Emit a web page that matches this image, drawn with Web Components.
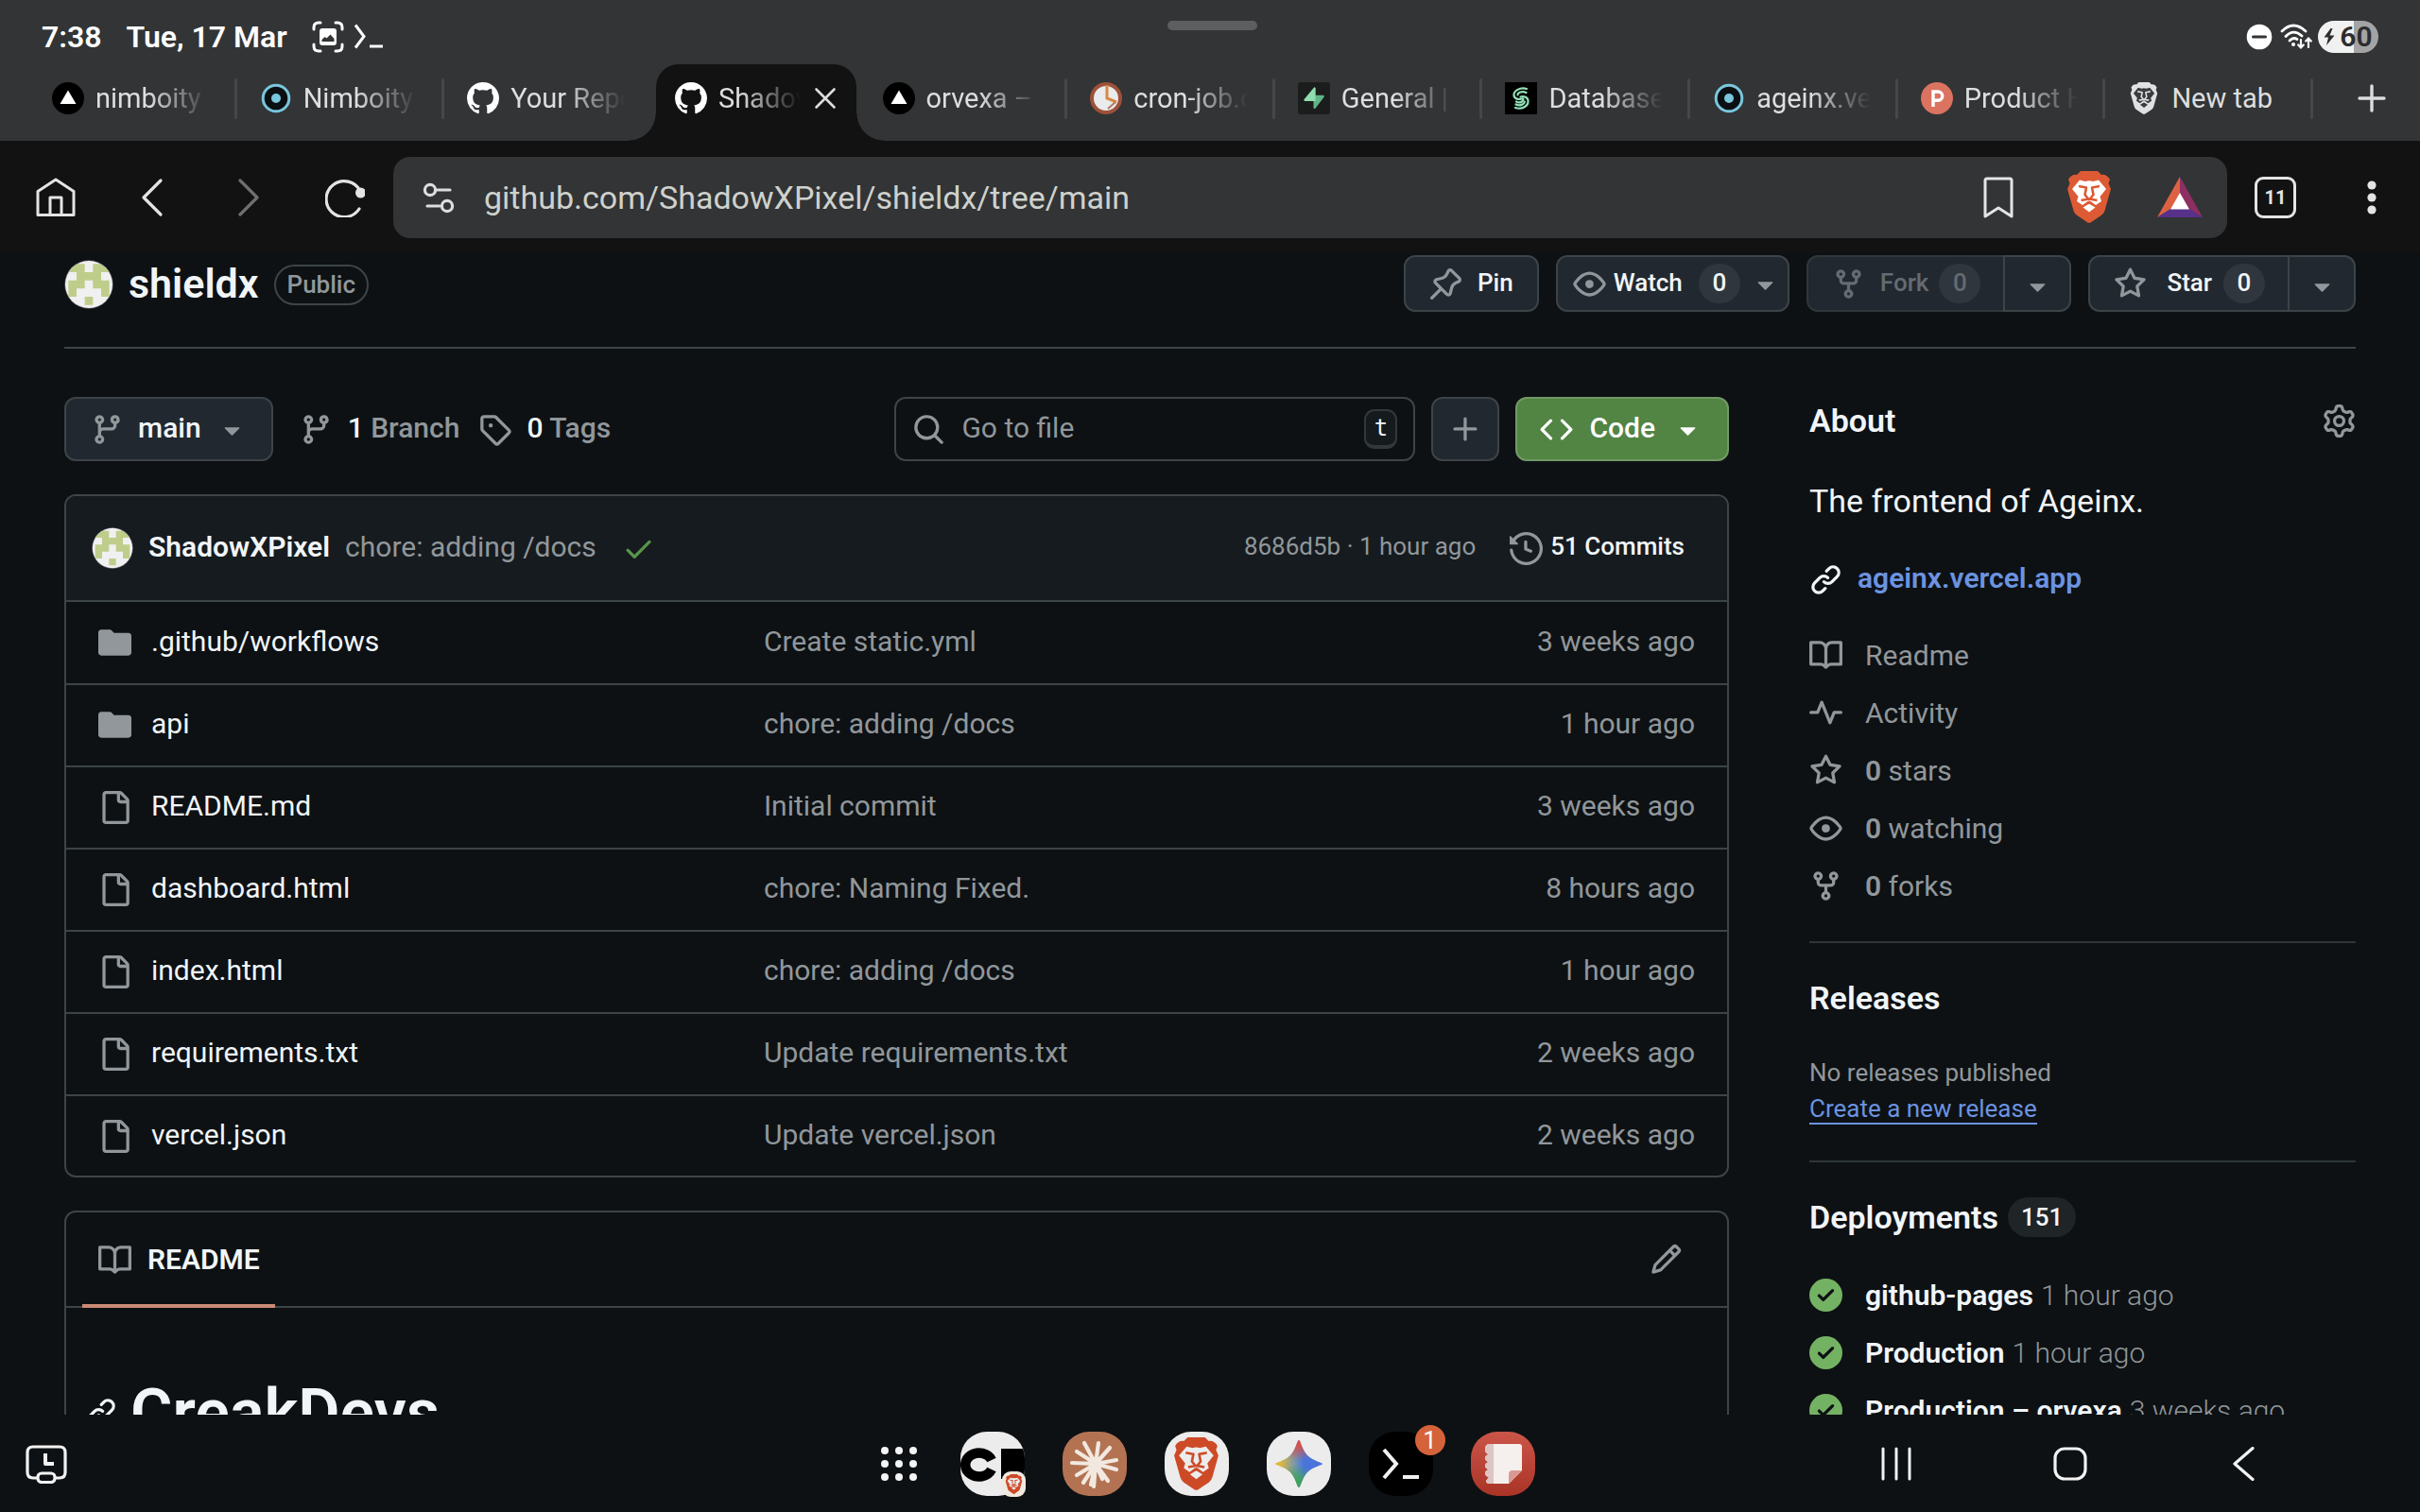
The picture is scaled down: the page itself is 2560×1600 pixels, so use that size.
<!DOCTYPE html>
<html lang="en">
<head>
<meta charset="utf-8">
<title>ShadowXPixel/shieldx</title>
<style>
  :root {
    --bg: #0d1114; --chrome: #323435; --bar: #121212; --line: #3d4447;
    --muted: #91979b; --text: #f1f5f8; --btn: #212830; --link: #6b93e0;
  }
  * { box-sizing: border-box; }
  body { margin: 0; height: 100vh; display: flex; flex-direction: column; overflow: hidden;
    background: var(--bg); color: var(--text); font: 400 30px/45px Roboto, "Noto Sans", sans-serif; }
  main { flex: 1; min-height: 0; overflow: hidden; padding: 0 68px; }
  .layout { display: grid; grid-template-columns: minmax(0, 1fr) 578px; column-gap: 85px; padding-top: 51px; }
  .left { display: flex; flex-direction: column; gap: 35px; min-width: 0; }
</style>
</head>
<body>
  <status-bar></status-bar>
  <tab-strip>
    <browser-tab icon="vercel">nimboity ·</browser-tab>
    <browser-tab icon="ring">Nimboity</browser-tab>
    <browser-tab icon="github" last>Your Repositories</browser-tab>
    <browser-tab icon="github" active>ShadowXPixel</browser-tab>
    <browser-tab icon="vercel">orvexa –</browser-tab>
    <browser-tab icon="cron">cron-job.org</browser-tab>
    <browser-tab icon="supabase">General | Settings</browser-tab>
    <browser-tab icon="spiral">Database</browser-tab>
    <browser-tab icon="ring">ageinx.vercel</browser-tab>
    <browser-tab icon="ph">Product Hunt</browser-tab>
    <browser-tab icon="lionmono" fits>New tab</browser-tab>
  </tab-strip>
  <tool-bar></tool-bar>
  <main>
    <repo-header></repo-header>
    <div class="layout">
      <div class="left">
        <file-nav></file-nav>
        <file-list></file-list>
        <readme-card></readme-card>
      </div>
      <about-panel></about-panel>
    </div>
  </main>
  <task-bar></task-bar>

<script>
const oct = d => ['0 0 16 16', `<path fill="currentColor" d="${d}"/>`];
const lion = (body, face) => ['0 0 46 55',
  `<path fill="${body}" d="M14 0H32L36 4C39 3 43 5 45 9L43.500 13L46 19L39.500 42Q38.500 45 36 46.800L25 54.200Q23 55.300 21 54.200L10 46.800Q7.500 45 6.500 42L0 19L2.500 13L1 9C3 5 7 3 10 4Z"/>
   <path fill="${face}" d="M13 9.500L19 11Q23 9.500 27 11L33 9.500L41 19L34.500 27L36 32L30 36L24.500 32Q23 31 21.500 32L16 36L10 32L11.500 27L5 19Z M16.500 38.500L22 35.200Q23 34.600 24 35.200L29.500 38.500L23 43.500Z"/>
   <path fill="none" stroke="${body}" stroke-width="2.600" stroke-linejoin="round" d="M12 16L20 17.500L18.500 25L22 29.500H24L27.500 25L26 17.500L34 16M14.500 31L23 29.500L31.500 31"/>`];
const ICONS = {
  fork: oct("M5 5.372v.878c0 .414.336.75.75.75h4.5a.75.75 0 0 0 .75-.75v-.878a2.25 2.25 0 1 1 1.5 0v.878a2.25 2.25 0 0 1-2.25 2.25h-1.5v2.128a2.251 2.251 0 1 1-1.5 0V8.5h-1.5A2.25 2.25 0 0 1 3.5 6.25v-.878a2.25 2.25 0 1 1 1.5 0ZM5 3.25a.75.75 0 1 0-1.5 0 .75.75 0 0 0 1.5 0Zm6.75.75a.75.75 0 1 0 0-1.5.75.75 0 0 0 0 1.5Zm-3 8.75a.75.75 0 1 0-1.5 0 .75.75 0 0 0 1.5 0Z"),
  branch: oct("M9.5 3.25a2.25 2.25 0 1 1 3 2.122V6A2.5 2.5 0 0 1 10 8.5H6a1 1 0 0 0-1 1v1.128a2.251 2.251 0 1 1-1.5 0V5.372a2.25 2.25 0 1 1 1.5 0v1.836A2.493 2.493 0 0 1 6 7h4a1 1 0 0 0 1-1v-.628A2.25 2.25 0 0 1 9.5 3.25Zm-6 0a.75.75 0 1 0 1.5 0 .75.75 0 0 0-1.5 0Zm8.25-.75a.75.75 0 1 0 0 1.5.75.75 0 0 0 0-1.5ZM4.25 12a.75.75 0 1 0 0 1.5.75.75 0 0 0 0-1.5Z"),
  tag: oct("M1 7.775V2.75C1 1.784 1.784 1 2.75 1h5.025c.464 0 .91.184 1.238.513l6.25 6.25a1.75 1.75 0 0 1 0 2.474l-5.026 5.026a1.75 1.75 0 0 1-2.474 0l-6.25-6.25A1.752 1.752 0 0 1 1 7.775Zm1.5 0c0 .066.026.13.073.177l6.25 6.25a.25.25 0 0 0 .354 0l5.025-5.025a.25.25 0 0 0 0-.354l-6.25-6.25a.25.25 0 0 0-.177-.073H2.75a.25.25 0 0 0-.25.25ZM6 5a1 1 0 1 1 0 2 1 1 0 0 1 0-2Z"),
  search: oct("M10.68 11.74a6 6 0 0 1-7.922-8.982 6 6 0 0 1 8.982 7.922l3.04 3.04a.749.749 0 0 1-.326 1.275.749.749 0 0 1-.734-.215ZM11.5 7a4.499 4.499 0 1 0-8.997 0A4.499 4.499 0 0 0 11.5 7Z"),
  eye: oct("M8 2c1.981 0 3.671.992 4.933 2.078 1.27 1.091 2.187 2.345 2.637 3.023a1.62 1.62 0 0 1 0 1.798c-.45.678-1.367 1.932-2.637 3.023C11.67 13.008 9.981 14 8 14c-1.981 0-3.671-.992-4.933-2.078C1.797 10.83.88 9.576.43 8.898a1.62 1.62 0 0 1 0-1.798c.45-.677 1.367-1.931 2.637-3.022C4.33 2.992 6.019 2 8 2ZM1.679 7.932a.12.12 0 0 0 0 .136c.411.622 1.241 1.75 2.366 2.717C5.176 11.758 6.527 12.5 8 12.5c1.473 0 2.825-.742 3.955-1.715 1.124-.967 1.954-2.096 2.366-2.717a.12.12 0 0 0 0-.136c-.412-.621-1.242-1.75-2.366-2.717C10.824 4.242 9.473 3.5 8 3.5c-1.473 0-2.825.742-3.955 1.715-1.124.967-1.954 2.096-2.366 2.717ZM8 10a2 2 0 1 1-.001-3.999A2 2 0 0 1 8 10Z"),
  star: oct("M8 .25a.75.75 0 0 1 .673.418l1.882 3.815 4.21.612a.75.75 0 0 1 .416 1.279l-3.046 2.97.719 4.192a.751.751 0 0 1-1.088.791L8 12.347l-3.766 1.98a.75.75 0 0 1-1.088-.79l.72-4.194L.818 6.374a.75.75 0 0 1 .416-1.28l4.21-.611L7.327.668A.75.75 0 0 1 8 .25Zm0 2.445L6.615 5.5a.75.75 0 0 1-.564.41l-3.097.45 2.24 2.184a.75.75 0 0 1 .216.664l-.528 3.084 2.769-1.456a.75.75 0 0 1 .698 0l2.77 1.456-.53-3.084a.75.75 0 0 1 .216-.664l2.24-2.183-3.096-.45a.75.75 0 0 1-.564-.41L8 2.694Z"),
  pin: oct("m11.294.984 3.722 3.722a1.75 1.75 0 0 1-.504 2.826l-1.327.613a3.089 3.089 0 0 0-1.707 2.084l-.584 2.454c-.317 1.332-1.972 1.8-2.94.832L5.75 11.311 1.78 15.28a.749.749 0 1 1-1.06-1.06l3.969-3.97-2.204-2.204c-.968-.968-.5-2.623.832-2.94l2.454-.584a3.08 3.08 0 0 0 2.084-1.707l.613-1.327a1.75 1.75 0 0 1 2.826-.504ZM6.283 9.723l2.732 2.731a.25.25 0 0 0 .42-.119l.584-2.454a4.586 4.586 0 0 1 2.537-3.098l1.328-.613a.25.25 0 0 0 .072-.404l-3.722-3.722a.25.25 0 0 0-.404.072l-.613 1.328a4.584 4.584 0 0 1-3.098 2.537l-2.454.584a.25.25 0 0 0-.119.42l2.731 2.732Z"),
  code: oct("m11.28 3.22 4.25 4.25a.75.75 0 0 1 0 1.06l-4.25 4.25a.749.749 0 0 1-1.275-.326.749.749 0 0 1 .215-.734L13.94 8l-3.72-3.72a.749.749 0 0 1 .326-1.275.749.749 0 0 1 .734.215Zm-6.56 0a.751.751 0 0 1 1.042.018.751.751 0 0 1 .018 1.042L2.06 8l3.72 3.72a.749.749 0 0 1-.326 1.275.749.749 0 0 1-.734-.215L.47 8.53a.75.75 0 0 1 0-1.06Z"),
  plus: oct("M7.75 2a.75.75 0 0 1 .75.75V7h4.25a.75.75 0 0 1 0 1.5H8.5v4.25a.75.75 0 0 1-1.5 0V8.5H2.75a.75.75 0 0 1 0-1.5H7V2.75A.75.75 0 0 1 7.75 2Z"),
  caret: oct("m4.427 7.427 3.396 3.396a.25.25 0 0 0 .354 0l3.396-3.396A.25.25 0 0 0 11.396 7H4.604a.25.25 0 0 0-.177.427Z"),
  history: oct("m.427 1.927 1.215 1.215a8.002 8.002 0 1 1-1.6 5.685.75.75 0 1 1 1.493-.154 6.5 6.5 0 1 0 1.18-4.458l1.358 1.358A.25.25 0 0 1 3.896 6H.25A.25.25 0 0 1 0 5.75V2.104a.25.25 0 0 1 .427-.177ZM7.75 4a.75.75 0 0 1 .75.75v2.992l2.028.812a.75.75 0 0 1-.557 1.392l-2.5-1A.751.751 0 0 1 7 8.25v-3.5A.75.75 0 0 1 7.75 4Z"),
  folder: ['0 0 16 16', '<path fill="currentColor" d="M1.400 1.500C.630 1.500 0 2.130 0 2.900V12.600C0 13.400.630 14 1.400 14H14.600C15.400 14 16 13.400 16 12.600V4.500C16 3.700 15.400 3.100 14.600 3.100H7.600L6.500 1.900C6.250 1.650 5.900 1.500 5.500 1.500Z"/>'],
  file: oct("M2 1.75C2 .784 2.784 0 3.75 0h6.586c.464 0 .909.184 1.237.513l2.914 2.914c.329.328.513.773.513 1.237v9.586A1.75 1.75 0 0 1 13.25 16h-9.5A1.75 1.75 0 0 1 2 14.25Zm1.75-.25a.25.25 0 0 0-.25.25v12.5c0 .138.112.25.25.25h9.5a.25.25 0 0 0 .25-.25V6h-2.75A1.75 1.75 0 0 1 9 4.25V1.5Zm6.75.062V4.25c0 .138.112.25.25.25h2.688l-.011-.013-2.914-2.914-.013-.011Z"),
  book: oct("M0 1.75A.75.75 0 0 1 .75 1h4.253c1.227 0 2.317.59 3 1.501A3.743 3.743 0 0 1 11.006 1h4.245a.75.75 0 0 1 .75.75v10.5a.75.75 0 0 1-.75.75h-4.507a2.25 2.25 0 0 0-1.591.659l-.622.621a.75.75 0 0 1-1.06 0l-.622-.621A2.25 2.25 0 0 0 5.258 13H.75a.75.75 0 0 1-.75-.75Zm7.251 10.324.004-5.073-.002-2.253A2.25 2.25 0 0 0 5.003 2.5H1.5v9h3.757a3.75 3.75 0 0 1 1.994.574ZM8.755 4.75l-.004 7.322a3.752 3.752 0 0 1 1.992-.572H14.5v-9h-3.495a2.25 2.25 0 0 0-2.25 2.25Z"),
  pulse: oct("M6 2c.306 0 .582.187.696.471L10 10.731l1.304-3.26A.751.751 0 0 1 12 7h3.25a.75.75 0 0 1 0 1.5h-2.742l-1.812 4.528a.751.751 0 0 1-1.392 0L6 4.77 4.696 8.03A.75.75 0 0 1 4 8.5H.75a.75.75 0 0 1 0-1.5h2.742l1.812-4.529A.751.751 0 0 1 6 2Z"),
  link: oct("m7.775 3.275 1.25-1.25a3.5 3.5 0 1 1 4.95 4.95l-2.5 2.5a3.5 3.5 0 0 1-4.95 0 .751.751 0 0 1 .018-1.042.751.751 0 0 1 1.042-.018 1.998 1.998 0 0 0 2.83 0l2.5-2.5a2.002 2.002 0 0 0-2.83-2.83l-1.25 1.25a.751.751 0 0 1-1.042-.018.751.751 0 0 1-.018-1.042Zm-4.69 9.64a1.998 1.998 0 0 0 2.83 0l1.25-1.25a.751.751 0 0 1 1.042.018.751.751 0 0 1 .018 1.042l-1.25 1.25a3.5 3.5 0 1 1-4.95-4.95l2.5-2.5a3.5 3.5 0 0 1 4.95 0 .751.751 0 0 1-.018 1.042.751.751 0 0 1-1.042.018 1.998 1.998 0 0 0-2.83 0l-2.5 2.5a1.998 1.998 0 0 0 0 2.83Z"),
  check: oct("M13.78 4.22a.75.75 0 0 1 0 1.06l-7.25 7.25a.75.75 0 0 1-1.06 0L2.22 9.28a.751.751 0 0 1 .018-1.042.751.751 0 0 1 1.042-.018L6 10.94l6.72-6.72a.75.75 0 0 1 1.06 0Z"),
  success: oct("M8 16A8 8 0 1 1 8 0a8 8 0 0 1 0 16Zm3.78-9.72a.751.751 0 0 0-.018-1.042.751.751 0 0 0-1.042-.018L6.75 9.19 5.28 7.72a.751.751 0 0 0-1.042.018.751.751 0 0 0-.018 1.042l2 2a.75.75 0 0 0 1.06 0Z"),
  pencil: oct("M11.013 1.427a1.75 1.75 0 0 1 2.474 0l1.086 1.086a1.75 1.75 0 0 1 0 2.474l-8.61 8.61c-.21.21-.47.364-.756.445l-3.251.93a.75.75 0 0 1-.927-.928l.929-3.25c.081-.286.235-.547.445-.758l8.61-8.61Zm.176 4.823L9.75 4.81l-6.286 6.287a.253.253 0 0 0-.064.108l-.558 1.953 1.953-.558a.253.253 0 0 0 .108-.064Zm1.238-3.763a.25.25 0 0 0-.354 0L10.811 3.75l1.439 1.44 1.263-1.263a.25.25 0 0 0 0-.354Z"),
  gear: oct("M8 0a8.2 8.2 0 0 1 .701.031C9.444.095 9.99.645 10.16 1.29l.288 1.107c.018.066.079.158.212.224.231.114.454.243.668.386.123.082.233.09.299.071l1.103-.303c.644-.176 1.392.021 1.82.63.27.385.506.792.704 1.218.315.675.111 1.422-.364 1.891l-.814.806c-.049.048-.098.147-.088.294.016.257.016.515 0 .772-.01.147.038.246.088.294l.814.806c.475.469.679 1.216.364 1.891a7.977 7.977 0 0 1-.704 1.217c-.428.61-1.176.807-1.82.63l-1.102-.302c-.067-.019-.177-.011-.3.071a5.909 5.909 0 0 1-.668.386c-.133.066-.194.158-.211.224l-.29 1.106c-.168.646-.715 1.196-1.458 1.26a8.006 8.006 0 0 1-1.402 0c-.743-.064-1.289-.614-1.458-1.26l-.289-1.106c-.018-.066-.079-.158-.212-.224a5.738 5.738 0 0 1-.668-.386c-.123-.082-.233-.09-.299-.071l-1.103.303c-.644.176-1.392-.021-1.82-.63a8.12 8.12 0 0 1-.704-1.218c-.315-.675-.111-1.422.363-1.891l.815-.806c.05-.048.098-.147.088-.294a6.214 6.214 0 0 1 0-.772c.01-.147-.038-.246-.088-.294l-.815-.806C.635 6.045.431 5.298.746 4.623a7.92 7.92 0 0 1 .704-1.217c.428-.61 1.176-.807 1.82-.63l1.102.302c.067.019.177.011.3-.071.214-.143.437-.272.668-.386.133-.066.194-.158.211-.224l.29-1.106C6.009.645 6.556.095 7.299.03 7.53.01 7.764 0 8 0Zm-.571 1.525c-.036.003-.108.036-.137.146l-.289 1.105c-.147.561-.549.967-.998 1.189-.173.086-.34.183-.5.29-.417.278-.97.423-1.529.27l-1.103-.303c-.109-.03-.175.016-.195.045-.22.312-.412.644-.573.99-.014.031-.021.11.059.19l.815.806c.411.406.562.957.53 1.456a4.709 4.709 0 0 0 0 .582c.032.499-.119 1.05-.53 1.456l-.815.806c-.081.08-.073.159-.059.19.162.346.353.677.573.989.02.03.085.076.195.046l1.102-.303c.56-.153 1.113-.008 1.53.27.161.107.328.204.501.29.447.222.85.629.997 1.189l.289 1.105c.029.109.101.143.137.146a6.6 6.6 0 0 0 1.142 0c.036-.003.108-.036.137-.146l.289-1.105c.147-.561.549-.967.998-1.189.173-.086.34-.183.5-.29.417-.278.97-.423 1.529-.27l1.103.303c.109.029.175-.016.195-.045.22-.313.411-.644.573-.99.014-.031.021-.11-.059-.19l-.815-.806c-.411-.406-.562-.957-.53-1.456a4.709 4.709 0 0 0 0-.582c-.032-.499.119-1.05.53-1.456l.815-.806c.081-.08.073-.159.059-.19a6.464 6.464 0 0 0-.573-.989c-.02-.03-.085-.076-.195-.046l-1.102.303c-.56.153-1.113.008-1.53-.27a4.44 4.44 0 0 0-.501-.29c-.447-.222-.85-.629-.997-1.189l-.289-1.105c-.029-.11-.101-.143-.137-.146a6.6 6.6 0 0 0-1.142 0ZM11 8a3 3 0 1 1-6 0 3 3 0 0 1 6 0ZM9.5 8a1.5 1.5 0 1 0-3.001.001A1.5 1.5 0 0 0 9.5 8Z"),
  github: ['0 0 16 16', '<path fill="#fff" d="M8 0c4.42 0 8 3.58 8 8a8.013 8.013 0 0 1-5.45 7.59c-.4.08-.55-.17-.55-.38 0-.27.01-1.13.01-2.2 0-.75-.25-1.23-.54-1.48 1.78-.2 3.65-.88 3.65-3.95 0-.88-.31-1.59-.82-2.15.08-.2.36-1.02-.08-2.12 0 0-.67-.22-2.2.82-.64-.18-1.32-.27-2-.27-.68 0-1.36.09-2 .27-1.53-1.03-2.2-.82-2.2-.82-.44 1.1-.16 1.92-.08 2.12-.51.56-.82 1.28-.82 2.15 0 3.06 1.86 3.75 3.64 3.95-.23.2-.44.55-.51 1.07-.46.21-1.61.55-2.33-.66-.15-.24-.6-.83-1.23-.82-.67.01-.27.38.01.53.34.19.73.9.82 1.13.16.45.68 1.31 2.69.94 0 .67.01 1.3.01 1.49 0 .21-.15.45-.55.38A7.995 7.995 0 0 1 0 8c0-4.42 3.58-8 8-8Z"/>'],
  vercel: ['0 0 34 34', '<circle cx="17" cy="17" r="17" fill="#000"/><path fill="#fff" d="M17 8.500L25.500 23H8.500Z"/>'],
  ring: ['0 0 34 34', '<circle cx="17" cy="17" r="13.800" fill="#0b0f12" stroke="#79c6dd" stroke-width="3"/><circle cx="17" cy="17" r="5" fill="#79c6dd"/>'],
  cron: ['0 0 34 34', '<circle cx="17" cy="17" r="15" fill="#e9ebec" stroke="#9d513a" stroke-width="4"/><path fill="none" stroke="#d98844" stroke-width="3" d="M18 3V17L28 21"/><path fill="none" stroke="#b07a62" stroke-width="2" d="M27 21L19 28"/>'],
  supabase: ['0 0 34 34', '<rect width="34" height="34" rx="3" fill="#1b1c1c"/><path fill="#5fb387" d="M18.500 6.500C18.500 5.500 17.400 5.200 16.800 6L6.800 18C6.200 18.900 6.700 20 7.700 20H16.500V27C16.500 28 17.800 28.500 18.400 27.700L27.600 15.800C28.200 15 27.700 13.800 26.700 13.800H18.500Z"/><path fill="#8fdcae" d="M18.500 6.500C18.500 5.500 17.400 5.200 16.800 6L6.800 18C6.200 18.900 6.700 20 7.700 20H18.500Z"/>'],
  spiral: ['0 0 34 34', '<rect width="34" height="34" fill="#000"/><g fill="none" stroke="#93e2b8" stroke-width="2.200" stroke-linecap="round"><path d="M23 7C16 5 9 9 9.500 14C10 18 15 18.500 17.500 17.500C20 16.500 20 19 18 20.500C16 22 13 21.500 12 20.500"/><path d="M22.500 11C18 9 13.500 11 13.500 13.500"/><path d="M11 27C18 29.500 25 25 24.500 19.500C24 15 19 14.500 16.500 15.500"/><path d="M11.500 23.500C16 25.500 20.500 23.500 20.800 20.500"/></g>'],
  ph: ['0 0 34 34', '<circle cx="17" cy="17" r="17" fill="#da7360"/><path fill="none" stroke="#fff" stroke-width="3.400" d="M13 26V10H18.200A4.600 4.600 0 0 1 18.200 19.200H13"/>'],
  lion: lion('#dd5a34', '#fff'),
  lionred: lion('#cd4a27', '#ececec'),
  lionmono: lion('#dfe1e3', '#3a3c3d'),
  bat: ['0 0 48 44', '<path fill="#dd6244" d="M24 0V18L14.500 34L0 43Z"/><path fill="#8d2f62" d="M24 0L48 43L33.500 34L24 18Z"/><path fill="#57318a" d="M0 43L14.500 34H33.500L48 43Z"/><path fill="#fff" d="M24 17L34 34.500H14Z"/>'],
  home: ['0 0 42 42', '<g fill="none" stroke="#e3e4e5" stroke-width="3" stroke-linejoin="round"><path d="M2 14.500L21 2L40 14.500V39.500H2Z"/><path d="M15 39V21H27V39"/></g>'],
  back: ['0 0 42 42', '<path fill="none" stroke="#e3e4e5" stroke-width="3.200" stroke-linecap="round" stroke-linejoin="round" d="M30 3L12 21L30 39"/>'],
  forward: ['0 0 42 42', '<path fill="none" stroke="#6f7071" stroke-width="3.200" stroke-linecap="round" stroke-linejoin="round" d="M12 3L30 21L12 39"/>'],
  reload: ['0 0 42 42', '<path fill="none" stroke="#e3e4e5" stroke-width="3.200" stroke-linecap="round" d="M36 33A19 19 0 1 1 37 14"/><circle cx="37.500" cy="16" r="5.500" fill="#e3e4e5"/>'],
  tune: ['0 0 34 34', '<g fill="none" stroke="#dcddde" stroke-width="3.200" stroke-linecap="round"><circle cx="8" cy="9" r="5.600"/><path d="M15 9H29M5 26H18"/><circle cx="26" cy="26" r="5.600"/></g>'],
  bookmark: ['0 0 34 44', '<path fill="none" stroke="#e3e4e5" stroke-width="3" stroke-linejoin="round" d="M3 4Q3 2 5 2H29Q31 2 31 4V42L17 33L3 42Z"/>'],
  dots: ['0 0 10 38', '<g fill="#e3e4e5"><circle cx="5" cy="6" r="4.600"/><circle cx="5" cy="19" r="4.600"/><circle cx="5" cy="32" r="4.600"/></g>'],
  close: ['0 0 24 24', '<path stroke="#dcddde" stroke-width="2.600" stroke-linecap="round" d="M2.500 2.500L21.500 21.500M21.500 2.500L2.500 21.500"/>'],
  add: ['0 0 30 30', '<path stroke="#dcddde" stroke-width="3.400" stroke-linecap="round" d="M15 2V28M2 15H28"/>'],
  shot: ['0 0 34 34', '<g fill="none" stroke="#fff" stroke-width="3" stroke-linecap="round"><path d="M2 9V7Q2 2 7 2H9M25 2H27Q32 2 32 7V9M32 25V27Q32 32 27 32H25M9 32H7Q2 32 2 27V25"/></g><path fill="#fff" fill-rule="evenodd" d="M11 8H23Q26 8 26 11V23Q26 26 23 26H11Q8 26 8 23V11Q8 8 11 8ZM10.500 22H23.500V19L19.500 14.500L15.500 18.500L13.500 17L10.500 20Z"/>'],
  prompt: ['0 0 32 28', '<path fill="none" stroke="#fff" stroke-width="3" d="M2 1.500L11 13.500L2 25.500M17 24H31"/>'],
  dnd: ['0 0 28 28', '<circle cx="14" cy="14" r="13.300" fill="#fff"/><path stroke="#323435" stroke-width="3" stroke-linecap="round" d="M7.500 14H20.500"/>'],
  wifi: ['0 0 34 28', '<g fill="none" stroke="#fff" stroke-width="2.800" stroke-linecap="round"><path d="M2 8Q14-4 27 8M6 13.500Q14 5 23 13"/><path d="M10 18Q14 14 18 16.500"/><path stroke-width="2.200" d="M22 17V25M19.200 22.500L22 25.500L24.800 22.500M30 25V16M27.200 18.500L30 15.500L32.800 18.500"/></g><circle cx="14" cy="22" r="2" fill="#fff"/>'],
  bolt: ['0 0 12 18', '<path fill="#2c2d2f" d="M7.500 0L.500 9.500H5L3 18L11.500 7.500H6.500L9.500 0Z"/>'],
  avatar: ['0 0 420 420', '<clipPath id="c"><circle cx="210" cy="210" r="202"/></clipPath><circle cx="210" cy="210" r="208" fill="#55585a"/><g clip-path="url(#c)"><rect width="420" height="420" fill="#f0f0f0"/><path fill="#bfcd8b" d="M35 35H175V105H245V35H385V105H315V175H385V315H315V245H245V175H175V245H105V315H35V175H105V105H35ZM175 315H245V385H175Z"/></g>'],
  recents: ['0 0 36 36', '<path stroke="#f2f2f2" stroke-width="3" stroke-linecap="round" d="M4 2V34M18 2V34M32 2V34"/>'],
  navhome: ['0 0 36 36', '<rect x="2" y="2" width="32" height="32" rx="10" fill="none" stroke="#f2f2f2" stroke-width="3.200"/>'],
  navback: ['0 0 36 36', '<path fill="none" stroke="#f2f2f2" stroke-width="3.200" stroke-linecap="round" stroke-linejoin="round" d="M27 1.500L8 18L27 34.500"/>'],
  clock: ['0 0 46 42', '<g fill="none" stroke="#f2f2f2" stroke-width="3.200"><path d="M15 36H9Q3 36 3 30V9Q3 3 9 3H37Q43 3 43 9V30Q43 36 37 36H31"/><rect x="14" y="31" width="18" height="9.500" rx="4"/><path stroke-width="4" stroke-linejoin="round" d="M22 10V21H31"/></g>'],
  grid: ['0 0 40 36', '<g fill="#f4f4f4"><circle cx="5" cy="4" r="4"/><circle cx="20" cy="4" r="4"/><circle cx="35" cy="4" r="4"/><circle cx="5" cy="18" r="4"/><circle cx="20" cy="18" r="4"/><circle cx="35" cy="18" r="4"/><circle cx="5" cy="32" r="4"/><circle cx="20" cy="32" r="4"/><circle cx="35" cy="32" r="4"/></g>'],
  appc: ['0 0 68 68', '<path fill="none" stroke="#000" stroke-width="10.500" d="M33 30A14.500 12.500 0 1 0 33 40"/><path d="M43 18H68V50H43Z"/>'],
  burst: ['0 0 68 68', '<g stroke="#f1e9e0" stroke-width="4.200" stroke-linecap="round" transform="translate(35 34)"><path d="M0 0L-12-22M0 0L3-22M0 0L15-17M0 0L22-4M0 0L22 6M0 0L13 18M0 0L-2 24M0 0L-13 20M0 0L-20 12M0 0L-25-1M0 0L-20-13M0 0L-5 22M0 0L7 16"/></g>'],
  gemini: ['0 0 68 68', '<defs><linearGradient id="b" x1="0" x2="1" y1="0" y2="0"><stop offset=".1" stop-color="#e0b93c"/><stop offset=".45" stop-color="#6d93b8"/><stop offset=".6" stop-color="#4a74dc"/></linearGradient><radialGradient id="r" cx=".48" cy=".02" r=".42"><stop offset=".2" stop-color="#d9504a"/><stop offset="1" stop-color="#d9504a" stop-opacity="0"/></radialGradient><radialGradient id="g" cx=".44" cy="1" r=".48"><stop offset=".3" stop-color="#3fa356"/><stop offset="1" stop-color="#3fa356" stop-opacity="0"/></radialGradient></defs>' + ['b', 'r', 'g'].map(f => `<path fill="url(#${f})" d="M34 9C36 9 36.500 18 43 25C50 31.500 59 32.500 59 34C59 35.500 50 36.500 43 43C36.500 50 36 59 34 59C32 59 31.500 50 25 43C18 36.500 9 35.500 9 34C9 32.500 18 31.500 25 25C31.500 18 32 9 34 9Z"/>`).join('')],
  term: ['0 0 68 68', '<path fill="none" stroke="#f1f1f1" stroke-width="4" d="M16 19L29 34L16 49M36 48H53"/>'],
  notes: ['0 0 68 68', '<path fill="#f5efee" d="M20 13H51Q54 13 54 16V41L40 55H20Q16 55 16 52L19 48Q15 47 15 44Q15 41 19 40Q15 39 15 36Q15 33 19 32Q15 31 15 28Q15 25 19 24Q15 23 15 18.500Q15 13 20 13Z"/><path fill="#dcc5c2" d="M24 13H20Q15 13 15 18.500Q15 23 19 24Q15 25 15 28Q15 31 19 32Q15 33 15 36Q15 39 19 40Q15 41 15 44Q15 47 19 48L16 52Q16 55 20 55H24Z"/><path fill="#d99a93" d="M54 41H44Q40 41 40 45V55Z"/>'],
};

const BASE = `*,*::before,*::after{box-sizing:border-box}
  button{font:inherit;color:inherit;background:none;border:0;padding:0;margin:0;display:flex;align-items:center;justify-content:center}
  a{color:inherit;text-decoration:none} h1,h2,h3,p,ul{margin:0;padding:0;font-size:inherit;list-style:none}
  x-icon{flex:none} .t{padding-bottom:3px}`;

function component(name, css, html) {
  const t = document.createElement('template');
  t.innerHTML = `<style>${BASE}${css}</style>${html}`;
  customElements.define(name, class extends HTMLElement {
    constructor() { super(); this.attachShadow({ mode: 'open' }).append(t.content.cloneNode(true)); }
  });
}

customElements.define('x-icon', class extends HTMLElement {
  connectedCallback() {
    if (this.shadowRoot) return;
    const [box, body] = ICONS[this.getAttribute('name')];
    this.attachShadow({ mode: 'open' }).innerHTML =
      `<style>:host{display:block;width:35px;height:35px}svg{display:block;width:100%;height:100%}</style>
       <svg viewBox="${box}" aria-hidden="true">${body}</svg>`;
  }
});

component('status-bar', `
  :host{display:grid;grid-template-columns:1fr auto 1fr;align-items:center;height:68px;padding:10px 44px 0;background:var(--chrome);
    color:#fff;font-size:32px;line-height:40px;font-weight:600}
  .side{display:flex;align-items:center}.date{margin:0 26px}
  .handle{width:95px;height:10px;border-radius:5px;background:#5d5e60;align-self:start;margin:12px 0 0 4px}
  .shot{width:34px;height:34px;margin-right:10px}.prompt{width:32px;height:28px}
  .end{justify-content:flex-end}.dnd{width:28px;height:28px}.wifi{width:34px;height:28px;margin:0 6px 0 8px}
  .battery{display:flex;align-items:center;justify-content:center;gap:5px;width:64px;height:34px;border-radius:17px;color:#2c2d2f;
    background:linear-gradient(90deg,#f1f1f1 60%,#a4a4a5 60%);font-size:30px;line-height:34px}
  .bolt{width:12px;height:18px}`,
  `<div class="side"><span>7:38</span><span class="date">Tue, 17 Mar</span><x-icon class="shot" name="shot"></x-icon><x-icon class="prompt" name="prompt"></x-icon></div>
   <div class="handle"></div>
   <div class="side end"><x-icon class="dnd" name="dnd"></x-icon><x-icon class="wifi" name="wifi"></x-icon>
     <span class="battery"><x-icon class="bolt" name="bolt"></x-icon><span>60</span></span></div>`);

component('tab-strip', `
  :host{display:flex;height:81px;background:var(--chrome);padding-left:31px}
  .tabs{flex:1;display:flex;min-width:0}
  .new{width:113px;padding:0 0 9px 10px}.new x-icon{width:30px;height:30px}`,
  `<div class="tabs"><slot></slot></div><button class="new" aria-label="New tab"><x-icon name="add"></x-icon></button>`);

customElements.define('browser-tab', class extends HTMLElement {
  connectedCallback() {
    if (this.shadowRoot) return;
    const active = this.hasAttribute('active');
    this.attachShadow({ mode: 'open' }).innerHTML = `<style>${BASE}
      :host{position:relative;flex:1 1 0;min-width:0;display:flex;padding-bottom:9px;color:#dddedf;font-size:29px;line-height:40px}
      .tab{position:relative;flex:1;min-width:0;justify-content:flex-start;gap:12px;padding:0 26px 0 24px}
      .tab x-icon{width:34px;height:34px}
      .title{flex:1;text-align:left;white-space:nowrap;overflow:hidden;
        -webkit-mask:linear-gradient(90deg,#000 calc(100% - 64px),transparent);mask:linear-gradient(90deg,#000 calc(100% - 64px),transparent)}
      :host([fits]) .title{-webkit-mask:none;mask:none}
      :host::after{content:"";align-self:center;width:3px;height:43px;border-radius:2px;background:#464748}
      :host([active])::after,:host([last])::after{visibility:hidden}
      .shape{position:absolute;inset:0 4px;background:var(--bar);border-radius:24px 24px 0 0}
      .shape::before,.shape::after{content:"";position:absolute;bottom:0;width:29px;height:29px}
      .shape::before{right:100%;background:radial-gradient(circle at 0 0,transparent 28px,var(--bar) 29px)}
      .shape::after{left:100%;background:radial-gradient(circle at 100% 0,transparent 28px,var(--bar) 29px)}
      .close{position:relative;width:24px;margin-right:22px}.close x-icon{width:24px;height:24px}
      :host([active]) .tab{padding-right:14px}</style>
      ${active ? '<div class="shape"></div>' : ''}
      <button class="tab" role="tab" aria-selected="${active}"><x-icon name="${this.getAttribute('icon')}"></x-icon><span class="title"><slot></slot></span></button>
      ${active ? '<button class="close" aria-label="Close tab"><x-icon name="close"></x-icon></button>' : ''}`;
  }
});

component('tool-bar', `
  :host{display:flex;align-items:center;height:119px;background:var(--bar);padding-left:8px}
  .nav{width:102px;height:86px}.nav x-icon{width:42px;height:42px}
  .url{flex:1;display:flex;align-items:center;height:86px;border-radius:18px;background:var(--chrome);padding-right:2px}
  .url button{width:96px;height:86px}
  input{flex:1;min-width:0;border:0;padding:0;background:none;outline:0;color:#cfd1cc;font:inherit;font-size:34px;line-height:44px}
  .tune{width:34px;height:34px}.bookmark{width:34px;height:44px}.lion{width:46px;height:55px}.bat{width:48px;height:44px}
  .count{display:flex;align-items:center;justify-content:center;width:44px;height:44px;border:3px solid #e3e4e5;border-radius:9px;color:#e3e4e5;font-size:20px;line-height:24px;font-weight:700}
  .nav .dots{width:10px;height:38px}`,
  `<button class="nav" aria-label="Home"><x-icon name="home"></x-icon></button>
   <button class="nav" aria-label="Back"><x-icon name="back"></x-icon></button>
   <button class="nav" aria-label="Forward"><x-icon name="forward"></x-icon></button>
   <button class="nav" aria-label="Reload"><x-icon name="reload"></x-icon></button>
   <div class="url"><button aria-label="Site settings"><x-icon class="tune" name="tune"></x-icon></button>
     <input type="text" aria-label="Address" value="github.com/ShadowXPixel/shieldx/tree/main">
     <button aria-label="Bookmark"><x-icon class="bookmark" name="bookmark"></x-icon></button>
     <button aria-label="Shields"><x-icon class="lion" name="lion"></x-icon></button>
     <button aria-label="Rewards"><x-icon class="bat" name="bat"></x-icon></button></div>
   <button class="nav" aria-label="Open tabs"><span class="count">11</span></button>
   <button class="nav" aria-label="Menu"><x-icon class="dots" name="dots"></x-icon></button>`);

component('repo-header', `
  :host{display:flex;align-items:center;justify-content:space-between;padding:2px 0 37px;border-bottom:2px solid var(--line)}
  .title,.actions{display:flex;align-items:center}.title{padding-top:2px}
  .avatar{width:52px;height:52px}
  h1{font-size:43px;line-height:52px;font-weight:600;margin:0 16px}
  .pill{border:2px solid var(--line);border-radius:22px;height:43px;padding:0 12px;font-size:26px;line-height:38px;font-weight:500;color:var(--muted)}
  .actions{gap:18px;font-size:26px;font-weight:500;line-height:34px}
  .btn{height:60px;border:2px solid var(--line);border-radius:12px;background:var(--btn);padding:0 25px}
  .group{display:flex}.group .btn:first-child{border-radius:12px 0 0 12px;border-right:0}.group .btn:last-child{border-radius:0 12px 12px 0;width:72px;padding:4px 0 0}
  x-icon{color:var(--muted)}
  .num{min-width:44px;height:42px;border-radius:21px;background:#2f363d;line-height:40px;text-align:center}
  .pin{gap:16px}.watch{padding:0 6px 0 16px}.watch .num{margin:0 9px 0 17px}.watch x-icon:first-child{margin-right:8px}
  .fork{gap:11px;color:#646b72;padding-right:24px}.fork:disabled{border-color:#30373b}.fork x-icon{color:#646b72;margin-right:5px}
  .star{gap:12px;padding-right:24px}.star x-icon{margin-right:9px}`,
  `<div class="title"><x-icon class="avatar" name="avatar"></x-icon><h1 class="t"><a href="#shieldx">shieldx</a></h1><span class="pill">Public</span></div>
   <div class="actions">
     <button class="btn pin"><x-icon name="pin"></x-icon><span class="t">Pin</span></button>
     <button class="btn watch"><x-icon name="eye"></x-icon><span class="t">Watch</span><span class="num">0</span><x-icon name="caret"></x-icon></button>
     <div class="group"><button class="btn fork" disabled><x-icon name="fork"></x-icon><span class="t">Fork</span><span class="num">0</span></button><button class="btn" aria-label="Fork options"><x-icon name="caret"></x-icon></button></div>
     <div class="group"><button class="btn star"><x-icon name="star"></x-icon><span class="t">Star</span><span class="num">0</span></button><button class="btn" aria-label="Star options"><x-icon name="caret"></x-icon></button></div>
   </div>`);

component('file-nav', `
  :host{display:flex;align-items:center;justify-content:space-between;height:68px;font-weight:500}
  x-icon{color:var(--muted)}
  .side{display:flex;align-items:center}.end{gap:17px}
  .btn{height:68px;border:2px solid var(--line);border-radius:12px;background:var(--btn)}
  .branch{padding:0 24px 0 26px;gap:15px}
  .stat{display:flex;align-items:center;gap:16px;color:var(--muted);margin-left:28px}.stat+.stat{margin-left:20px}
  b{font-weight:500;color:var(--text)}
  .search{display:flex;align-items:center;gap:17px;width:551px;height:68px;border:2px solid var(--line);border-radius:12px;padding:0 17px}
  input{flex:1;min-width:0;border:0;padding:0 0 3px;background:none;outline:0;color:var(--text);font:inherit;font-weight:400}
  input::placeholder{color:var(--muted);opacity:1}
  kbd{width:35px;height:42px;border:2px solid #32383c;border-bottom-width:4px;border-radius:11px;background:#151a1d;text-align:center;font:400 24px/36px "DejaVu Sans Mono",monospace}
  .plus{width:72px}.code{background:#528444;border-color:#709a65;color:#fff;gap:17px;padding:0 24px}.code x-icon{color:#fff}`,
  `<div class="side"><button class="btn branch" aria-haspopup="menu"><x-icon name="branch"></x-icon><span class="t">main</span><x-icon name="caret"></x-icon></button>
     <a class="stat" href="#branches"><x-icon name="branch"></x-icon><span class="t"><b>1</b> Branch</span></a>
     <a class="stat" href="#tags"><x-icon name="tag"></x-icon><span class="t"><b>0</b> Tags</span></a></div>
   <div class="side end"><label class="search"><x-icon name="search"></x-icon><input type="text" placeholder="Go to file" aria-label="Go to file"><kbd>t</kbd></label>
     <button class="btn plus" aria-label="Add file"><x-icon name="plus"></x-icon></button>
     <button class="btn code"><x-icon name="code"></x-icon><span class="t">Code</span><x-icon name="caret"></x-icon></button></div>`);

const FILES = [
  ['folder', '.github/workflows', 'Create static.yml', '3 weeks ago'],
  ['folder', 'api', 'chore: adding /docs', '1 hour ago'],
  ['file', 'README.md', 'Initial commit', '3 weeks ago'],
  ['file', 'dashboard.html', 'chore: Naming Fixed.', '8 hours ago'],
  ['file', 'index.html', 'chore: adding /docs', '1 hour ago'],
  ['file', 'requirements.txt', 'Update requirements.txt', '2 weeks ago'],
  ['file', 'vercel.json', 'Update vercel.json', '2 weeks ago'],
];
component('file-list', `
  :host{display:block;border:2px solid var(--line);border-radius:12px;overflow:hidden}
  .commit{display:flex;align-items:center;height:112px;border-bottom:2px solid var(--line);background:#161b1f;padding:0 45px 0 27px;color:var(--muted)}
  .avatar{width:44px;height:44px;margin-right:16px}
  .commit b{font-weight:600;color:var(--text)} .msg{margin:0 27px 0 16px}
  .check{color:#57964a}.meta{margin-left:auto;margin-right:36px;font-size:26px}
  .commits{display:flex;align-items:center;gap:8px;font-size:26px}.commits b{font-weight:500}
  table{width:100%;table-layout:fixed;border-collapse:collapse;color:var(--muted)}
  td{height:87px;padding:0 0 3px;border-bottom:2px solid var(--line);line-height:40px}
  tr:last-child td{border-bottom:0;height:85px}
  td:first-child{width:42%;padding:0}td:last-child{width:20%;text-align:right;padding-right:34px}
  .name{display:flex;align-items:center;gap:21px;padding-left:34px;color:var(--text)}.name x-icon{color:var(--muted)}`,
  `<div class="commit"><x-icon class="avatar" name="avatar"></x-icon><a class="t" href="#author"><b>ShadowXPixel</b></a><a class="msg t" href="#commit">chore: adding /docs</a><x-icon class="check" name="check"></x-icon>
     <span class="meta t">8686d5b · 1 hour ago</span><a class="commits" href="#commits"><x-icon name="history"></x-icon><b class="t">51 Commits</b></a></div>
   <table><tbody>${FILES.map(([i, n, m, t]) => `<tr><td><a class="name" href="#${n}"><x-icon name="${i}"></x-icon><span class="t">${n}</span></a></td><td><a href="#c">${m}</a></td><td>${t}</td></tr>`).join('')}</tbody></table>`);

component('readme-card', `
  :host{display:block;border:2px solid var(--line);border-radius:12px}
  .head{display:flex;justify-content:space-between;height:101px;border-bottom:2px solid var(--line);padding:0 47px 0 17px;color:var(--muted)}
  .head a{display:flex;align-items:center;gap:17px;padding:4px 16px 0 17px;height:101px;border-bottom:4px solid #cb8a74;color:var(--text);font-weight:600}
  .head a x-icon{color:var(--muted)}
  .body{display:flex;align-items:center;padding:68px 19px 80px}
  h1{font-size:68px;line-height:86px;font-weight:600}.body x-icon{margin-right:14px}`,
  `<div class="head"><a href="#readme"><x-icon name="book"></x-icon><span class="t">README</span></a><button aria-label="Edit file"><x-icon name="pencil"></x-icon></button></div>
   <div class="body"><x-icon name="link"></x-icon><h1>CreakDevs</h1></div>`);

component('about-panel', `
  :host{display:block;color:var(--muted)}
  section{border-bottom:2px solid #2f3538;padding:36px 0}
  section:first-of-type{padding-top:0}section:last-of-type{border:0}
  h2{color:var(--text);font-size:34px;line-height:44px;font-weight:600}
  .head{display:flex;justify-content:space-between;align-items:center;height:50px}
  .desc{font-size:34px;line-height:52px;color:var(--text);margin:34px 0 33px}
  .site{display:flex;align-items:center;gap:16px;color:var(--text);margin-bottom:34px}.site a{color:var(--link);font-weight:600}
  ul{display:flex;flex-direction:column;gap:16px}li,li a{display:flex;align-items:center}
  li x-icon{margin-right:24px}b{font-weight:600}
  .small{font-size:26px;line-height:38px;margin-top:38px}.small a{color:var(--link);border-bottom:2px solid var(--link)}
  .count{height:42px;border-radius:21px;background:#1f2427;color:var(--text);padding:0 14px;font-size:26px;line-height:42px;font-weight:500}
  .deps{display:flex;align-items:center;gap:10px;margin-bottom:38px}
  .dep b{color:var(--text)}.dep x-icon{color:#74b263}.dep time{font-weight:300;margin-left:8px}`,
  `<section><div class="head"><h2>About</h2><button aria-label="Edit details"><x-icon name="gear"></x-icon></button></div>
     <p class="desc">The frontend of Ageinx.</p>
     <div class="site"><x-icon name="link"></x-icon><a class="t" href="#site">ageinx.vercel.app</a></div>
     <ul><li><a href="#readme"><x-icon name="book"></x-icon>Readme</a></li><li><a href="#activity"><x-icon name="pulse"></x-icon>Activity</a></li>
       <li><a href="#stars"><x-icon name="star"></x-icon><span><b>0</b> stars</span></a></li><li><a href="#watching"><x-icon name="eye"></x-icon><span><b>0</b> watching</span></a></li>
       <li><a href="#forks"><x-icon name="fork"></x-icon><span><b>0</b> forks</span></a></li></ul></section>
   <section><h2>Releases</h2><div class="small">No releases published<br><a href="#new">Create a new release</a></div></section>
   <section><div class="deps"><h2>Deployments</h2><span class="count">151</span></div>
     <ul><li class="dep"><x-icon name="success"></x-icon><a href="#d1"><b>github-pages</b></a><time>1 hour ago</time></li>
       <li class="dep"><x-icon name="success"></x-icon><a href="#d2"><b>Production</b></a><time>1 hour ago</time></li>
       <li class="dep"><x-icon name="success"></x-icon><a href="#d3"><b>Production – orvexa</b></a><time>3 weeks ago</time></li></ul></section>`);

component('task-bar', `
  :host{display:grid;grid-template-columns:1fr auto 1fr;align-items:center;height:103px;background:var(--bg);padding:0 94px 0 26px}
  .clock{width:46px;height:42px}
  .apps{display:flex;align-items:center;gap:40px;padding-left:62px}.nav{display:flex;justify-content:flex-end}
  .nav button{width:184px;height:103px}.nav x-icon{width:36px;height:36px}
  .apps button{position:relative;width:68px;height:68px;border-radius:28px;background:#ececec}
  .apps button x-icon{width:68px;height:68px;border-radius:28px;overflow:hidden}
  .apps .all{width:40px;height:40px;background:none;margin-right:5px}.apps .all x-icon{width:40px;height:36px;border-radius:0}
  .apps .lion x-icon{width:47px;height:56px;border-radius:0}
  .apps .mini{position:absolute;right:-1px;bottom:-1px;width:25px;height:27px;padding:3px;border-radius:9px;background:#efe9df}
  .apps .mini x-icon{width:19px;height:21px;border-radius:0}
  .apps .burst{background:#b37353}.apps .term{background:#000}.apps .notes{background:linear-gradient(#cb5548,#a93426)}
  .badge{position:absolute;top:-7px;right:-13px;width:32px;height:32px;border-radius:16px;background:#d5633a;color:#fff;font-size:26px;line-height:32px;text-align:center}`,
  `<x-icon class="clock" name="clock"></x-icon>
   <div class="apps"><button class="all" aria-label="All apps"><x-icon name="grid"></x-icon></button>
     <button aria-label="Web app"><x-icon name="appc"></x-icon><span class="mini"><x-icon name="lionred"></x-icon></span></button>
     <button class="burst" aria-label="Assistant"><x-icon name="burst"></x-icon></button>
     <button class="lion" aria-label="Browser"><x-icon name="lionred"></x-icon></button>
     <button aria-label="Gemini"><x-icon name="gemini"></x-icon></button>
     <button class="term" aria-label="Terminal"><x-icon name="term"></x-icon><span class="badge">1</span></button>
     <button class="notes" aria-label="Notes"><x-icon name="notes"></x-icon></button></div>
   <div class="nav"><button aria-label="Recents"><x-icon name="recents"></x-icon></button><button aria-label="Home"><x-icon name="navhome"></x-icon></button><button aria-label="Back"><x-icon name="navback"></x-icon></button></div>`);
</script>
</body>
</html>
